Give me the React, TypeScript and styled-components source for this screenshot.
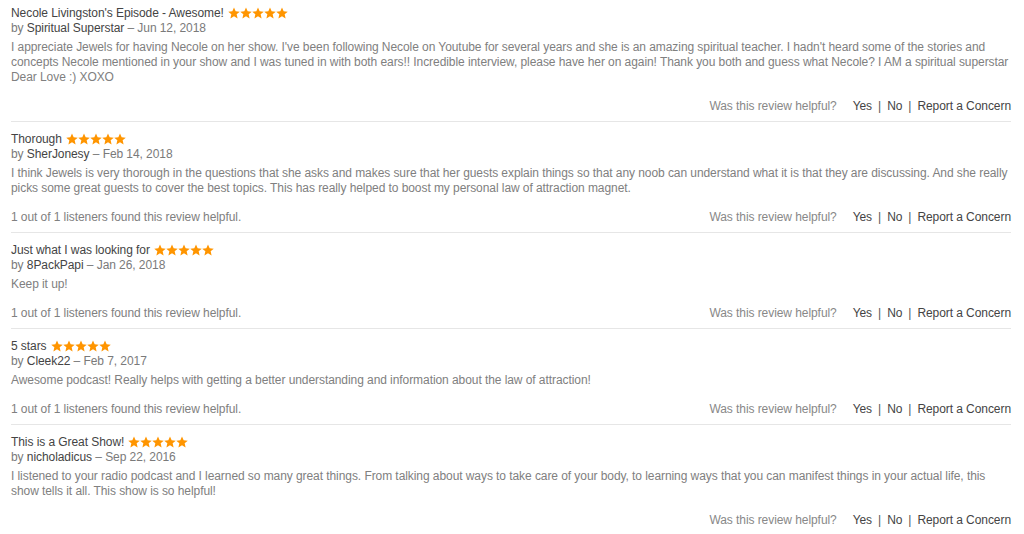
import styled, { createGlobalStyle } from "styled-components";

const GlobalStyle = createGlobalStyle`
  body {
    margin: 0;
    background: #fff;
    font-family: "Helvetica Neue", "Liberation Sans", Arial, sans-serif;
    letter-spacing: -0.07px;
    -webkit-font-smoothing: antialiased;
  }
`

const List = styled.div`
  padding: 5px 13px 0 11px;
`

const Review = styled.div`
  padding: 1px 0 7px;
  border-bottom: 1px solid #e6e6e6;
  margin-bottom: 9px;

  &:last-child {
    border-bottom: none;
  }
`

const Title = styled.div`
  display: flex;
  align-items: center;
  gap: 4px;
  font-size: 12px;
  line-height: 15px;
  color: #444;
`

const Stars = styled.span`
  display: inline-flex;
  margin-top: -1px;
`

const Byline = styled.div`
  font-size: 12px;
  line-height: 15px;
  color: #7a7a7a;

  .author {
    color: #444;
  }
`

const Body = styled.p`
  margin: 4px 0 0;
  font-size: 12px;
  line-height: 15px;
  color: #808080;
`

const Footer = styled.div`
  display: flex;
  align-items: center;
  margin-top: 14px;
  font-size: 12px;
  line-height: 15px;
`

const Helpful = styled.div`
  color: #808080;
`

const Actions = styled.div`
  margin-left: auto;
  display: flex;
  align-items: center;
  color: #888;

  .ask {
    margin-right: 16px;
  }

  .link {
    color: #444;
  }

  .sep {
    color: #555;
    margin: 0 6px;
  }
`

const Star = () => (
  <svg width="12" height="12" viewBox="0 0 24 24">
    <path
      fill="#ff9500"
      d="M12 1l3.3 7.5 8.2.8-6.2 5.4 1.9 8.1L12 18.6l-7.2 4.2 1.9-8.1L.5 9.3l8.2-.8z"
    />
  </svg>
)

type ReviewData = {
  title: string;
  author: string;
  date: string;
  body: string;
  helpful?: string;
}

const reviews: ReviewData[] = [
  {
    title: "Necole Livingston's Episode - Awesome!",
    author: 'Spiritual Superstar',
    date: 'Jun 12, 2018',
    body: "I appreciate Jewels for having Necole on her show. I've been following Necole on Youtube for several years and she is an amazing spiritual teacher. I hadn't heard some of the stories and concepts Necole mentioned in your show and I was tuned in with both ears!! Incredible interview, please have her on again! Thank you both and guess what Necole? I AM a spiritual superstar Dear Love :) XOXO",
  },
  {
    title: 'Thorough',
    author: 'SherJonesy',
    date: 'Feb 14, 2018',
    body: 'I think Jewels is very thorough in the questions that she asks and makes sure that her guests explain things so that any noob can understand what it is that they are discussing. And she really picks some great guests to cover the best topics. This has really helped to boost my personal law of attraction magnet.',
    helpful: '1 out of 1 listeners found this review helpful.',
  },
  {
    title: 'Just what I was looking for',
    author: '8PackPapi',
    date: 'Jan 26, 2018',
    body: 'Keep it up!',
    helpful: '1 out of 1 listeners found this review helpful.',
  },
  {
    title: '5 stars',
    author: 'Cleek22',
    date: 'Feb 7, 2017',
    body: 'Awesome podcast! Really helps with getting a better understanding and information about the law of attraction!',
    helpful: '1 out of 1 listeners found this review helpful.',
  },
  {
    title: 'This is a Great Show!',
    author: 'nicholadicus',
    date: 'Sep 22, 2016',
    body: 'I listened to your radio podcast and I learned so many great things. From talking about ways to take care of your body, to learning ways that you can manifest things in your actual life, this show tells it all. This show is so helpful!',
  },
]

const App = () => {
  return (
    <>
      <GlobalStyle />
      <List>
        {reviews.map((r) => (
          <Review key={r.author}>
            <Title>
              {r.title}
              <Stars>
                {[0, 1, 2, 3, 4].map((i) => <Star key={i} />)}
              </Stars>
            </Title>
            <Byline>
              by <span className='author'>{r.author}</span> – {r.date}
            </Byline>
            <Body>{r.body}</Body>
            <Footer>
              <Helpful>{r.helpful}</Helpful>
              <Actions>
                <span className='ask'>Was this review helpful?</span>
                <span className='link'>Yes</span>
                <span className='sep'>|</span>
                <span className='link'>No</span>
                <span className='sep'>|</span>
                <span className='link'>Report a Concern</span>
              </Actions>
            </Footer>
          </Review>
        ))}
      </List>
    </>
  )
}

export default App
